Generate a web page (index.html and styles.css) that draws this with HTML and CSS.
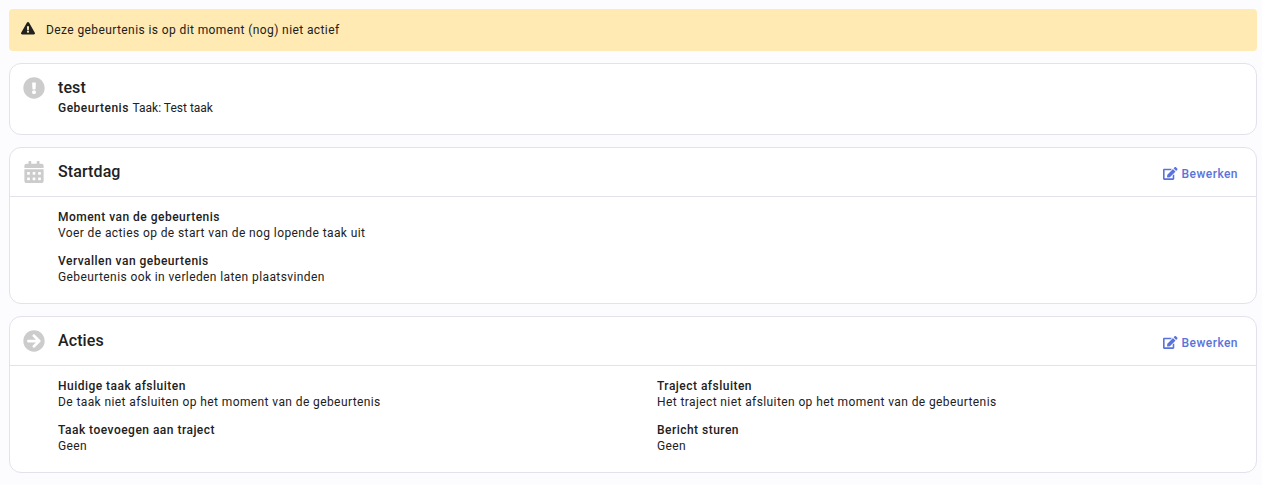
FILE: index.html
```html
<!DOCTYPE html>
<html lang="nl">
<head>
<meta charset="utf-8">
<title>Gebeurtenis</title>
<link rel="stylesheet" href="styles.css">
</head>
<body>
<main class="page">
  <div class="alert">
    <svg class="alert-icon" viewBox="0 0 576 512"><path d="M569.517 440.013C587.975 472.007 564.806 512 527.94 512H48.054c-36.937 0-59.999-40.055-41.577-71.987L246.423 24.035c18.467-32.009 64.72-31.951 83.154 0l239.94 416.028zM288 354c-25.405 0-46 20.595-46 46s20.595 46 46 46 46-20.595 46-46-20.595-46-46-46zm-43.673-165.346l7.418 136c.347 6.364 5.609 11.346 11.982 11.346h48.546c6.373 0 11.635-4.982 11.982-11.346l7.418-136c.375-6.874-5.098-12.654-11.982-12.654h-63.383c-6.884 0-12.356 5.78-11.981 12.654z"/></svg>
    <span>Deze gebeurtenis is op dit moment (nog) niet actief</span>
  </div>

  <section class="card card-summary">
    <svg class="card-icon" viewBox="0 0 512 512"><path d="M504 256c0 136.997-111.043 248-248 248S8 392.997 8 256C8 119.083 119.043 8 256 8s248 111.083 248 248zm-248 50c-25.405 0-46 20.595-46 46s20.595 46 46 46 46-20.595 46-46-20.595-46-46-46zm-43.673-165.346l7.418 136c.347 6.364 5.609 11.346 11.982 11.346h48.546c6.373 0 11.635-4.982 11.982-11.346l7.418-136c.375-6.874-5.098-12.654-11.982-12.654h-63.383c-6.884 0-12.356 5.78-11.981 12.654z"/></svg>
    <div>
      <h2 class="card-title">test</h2>
      <p class="summary-line"><strong>Gebeurtenis</strong> Taak: Test taak</p>
    </div>
  </section>

  <section class="card">
    <header class="card-head">
      <svg class="card-icon" viewBox="0 0 448 512"><path d="M0 464c0 26.5 21.5 48 48 48h352c26.5 0 48-21.5 48-48V192H0v272zm320-196c0-6.6 5.4-12 12-12h40c6.6 0 12 5.4 12 12v40c0 6.6-5.4 12-12 12h-40c-6.6 0-12-5.4-12-12v-40zm0 128c0-6.6 5.4-12 12-12h40c6.6 0 12 5.4 12 12v40c0 6.6-5.4 12-12 12h-40c-6.6 0-12-5.4-12-12v-40zM192 268c0-6.6 5.4-12 12-12h40c6.6 0 12 5.4 12 12v40c0 6.6-5.4 12-12 12h-40c-6.6 0-12-5.4-12-12v-40zm0 128c0-6.6 5.4-12 12-12h40c6.6 0 12 5.4 12 12v40c0 6.6-5.4 12-12 12h-40c-6.6 0-12-5.4-12-12v-40zM64 268c0-6.6 5.4-12 12-12h40c6.6 0 12 5.4 12 12v40c0 6.6-5.4 12-12 12H76c-6.6 0-12-5.4-12-12v-40zm0 128c0-6.6 5.4-12 12-12h40c6.6 0 12 5.4 12 12v40c0 6.6-5.4 12-12 12H76c-6.6 0-12-5.4-12-12v-40zM400 64h-48V16c0-8.8-7.2-16-16-16h-32c-8.8 0-16 7.2-16 16v48H160V16c0-8.8-7.2-16-16-16h-32c-8.8 0-16 7.2-16 16v48H48C21.5 64 0 85.5 0 112v48h448v-48c0-26.5-21.5-48-48-48z"/></svg>
      <h2 class="card-title">Startdag</h2>
      <a class="edit-link" href="#">
        <svg class="edit-icon" viewBox="0 0 576 512"><path d="M402.6 83.2l90.2 90.2c3.8 3.8 3.8 10 0 13.8L274.4 405.6l-92.8 10.3c-12.4 1.4-22.9-9.1-21.5-21.5l10.3-92.8L388.8 83.2c3.8-3.8 10-3.8 13.8 0zm162-22.9l-48.8-48.8c-15.2-15.2-39.9-15.2-55.2 0l-35.4 35.4c-3.8 3.8-3.8 10 0 13.8l90.2 90.2c3.8 3.8 10 3.8 13.8 0l35.4-35.4c15.2-15.3 15.2-40 0-55.2zM384 346.2V448H64V128h229.8c3.2 0 6.2-1.3 8.5-3.5l40-40c7.6-7.6 2.2-20.5-8.5-20.5H48C21.5 64 0 85.5 0 112v352c0 26.5 21.5 48 48 48h352c26.5 0 48-21.5 48-48V306.2c0-10.7-12.9-16-20.5-8.5l-40 40c-2.2 2.3-3.5 5.3-3.5 8.5z"/></svg>
        Bewerken
      </a>
    </header>
    <div class="card-body">
      <div class="field">
        <div class="field-label">Moment van de gebeurtenis</div>
        <div>Voer de acties op de start van de nog lopende taak uit</div>
      </div>
      <div class="field">
        <div class="field-label">Vervallen van gebeurtenis</div>
        <div>Gebeurtenis ook in verleden laten plaatsvinden</div>
      </div>
    </div>
  </section>

  <section class="card">
    <header class="card-head">
      <svg class="card-icon" viewBox="0 0 512 512"><path d="M256 8c137 0 248 111 248 248S393 504 256 504 8 393 8 256 119 8 256 8zm-28.9 143.6l75.5 72.4H120c-13.3 0-24 10.7-24 24v16c0 13.3 10.7 24 24 24h182.6l-75.5 72.4c-9.7 9.3-9.9 24.8-.4 34.3l11 10.9c9.4 9.4 24.6 9.4 33.9 0L404.3 273c9.4-9.4 9.4-24.6 0-33.9L271.6 106.3c-9.4-9.4-24.6-9.4-33.9 0l-11 10.9c-9.5 9.6-9.3 25.1.4 34.4z"/></svg>
      <h2 class="card-title">Acties</h2>
      <a class="edit-link" href="#">
        <svg class="edit-icon" viewBox="0 0 576 512"><path d="M402.6 83.2l90.2 90.2c3.8 3.8 3.8 10 0 13.8L274.4 405.6l-92.8 10.3c-12.4 1.4-22.9-9.1-21.5-21.5l10.3-92.8L388.8 83.2c3.8-3.8 10-3.8 13.8 0zm162-22.9l-48.8-48.8c-15.2-15.2-39.9-15.2-55.2 0l-35.4 35.4c-3.8 3.8-3.8 10 0 13.8l90.2 90.2c3.8 3.8 10 3.8 13.8 0l35.4-35.4c15.2-15.3 15.2-40 0-55.2zM384 346.2V448H64V128h229.8c3.2 0 6.2-1.3 8.5-3.5l40-40c7.6-7.6 2.2-20.5-8.5-20.5H48C21.5 64 0 85.5 0 112v352c0 26.5 21.5 48 48 48h352c26.5 0 48-21.5 48-48V306.2c0-10.7-12.9-16-20.5-8.5l-40 40c-2.2 2.3-3.5 5.3-3.5 8.5z"/></svg>
        Bewerken
      </a>
    </header>
    <div class="card-body card-body-grid">
      <div class="field">
        <div class="field-label">Huidige taak afsluiten</div>
        <div>De taak niet afsluiten op het moment van de gebeurtenis</div>
      </div>
      <div class="field">
        <div class="field-label">Traject afsluiten</div>
        <div>Het traject niet afsluiten op het moment van de gebeurtenis</div>
      </div>
      <div class="field">
        <div class="field-label">Taak toevoegen aan traject</div>
        <div>Geen</div>
      </div>
      <div class="field">
        <div class="field-label">Bericht sturen</div>
        <div>Geen</div>
      </div>
    </div>
  </section>
</main>
</body>
</html>
```
FILE: styles.css
```css
* { box-sizing: border-box; }
html, body { margin: 0; height: 100%; }
body {
  background: #fcfbfe;
  color: #212121;
  font-family: Roboto, "Liberation Sans", sans-serif;
  font-size: 12px;
  line-height: 16px;
  letter-spacing: 0.4px;
}
.page {
  display: flex;
  flex-direction: column;
  gap: 12px;
  padding: 9px 5px 0 9px;
}
.alert {
  display: flex;
  align-items: center;
  gap: 11px;
  height: 42px;
  padding: 0 12px;
  background: #ffeab3;
  border-radius: 4px;
}
.alert-icon { width: 14px; height: 12.5px; margin-top: -3px; fill: #212121; }
.card {
  background: #fff;
  border: 1px solid #e3e2ec;
  border-radius: 12px;
}
.card-summary {
  display: flex;
  gap: 13px;
  height: 72px;
  padding: 13px;
}
.card-icon { width: 22px; height: 22px; flex: none; fill: #cccccc; }
.card-title {
  margin: 0;
  font-size: 16px;
  line-height: 22px;
  font-weight: 500;
  letter-spacing: 0.1px;
}
.summary-line { margin: 1px 0 0; letter-spacing: 0; }
.summary-line strong { margin-right: 1px; letter-spacing: 0.5px; }
strong, .field-label { font-weight: 500; }
.field-label { letter-spacing: 0.48px; }
.card-head {
  display: flex;
  align-items: center;
  gap: 13px;
  height: 49px;
  padding: 0 18px 1px 13px;
  border-bottom: 1px solid #e3e2ec;
}
.card-head .card-title { flex: 1; }
.edit-link {
  display: flex;
  align-items: center;
  gap: 4px;
  margin-top: 4px;
  color: #5a73dc;
  font-weight: 500;
  letter-spacing: 0.45px;
  text-decoration: none;
}
.edit-icon { width: 14.5px; height: 13px; fill: currentColor; }
.card-body {
  display: flex;
  flex-direction: column;
  gap: 12px;
  padding: 12px 0 18px 48px;
}
.card-body-grid {
  display: grid;
  grid-template-columns: 1fr 1fr;
  column-gap: 0;
}
```
